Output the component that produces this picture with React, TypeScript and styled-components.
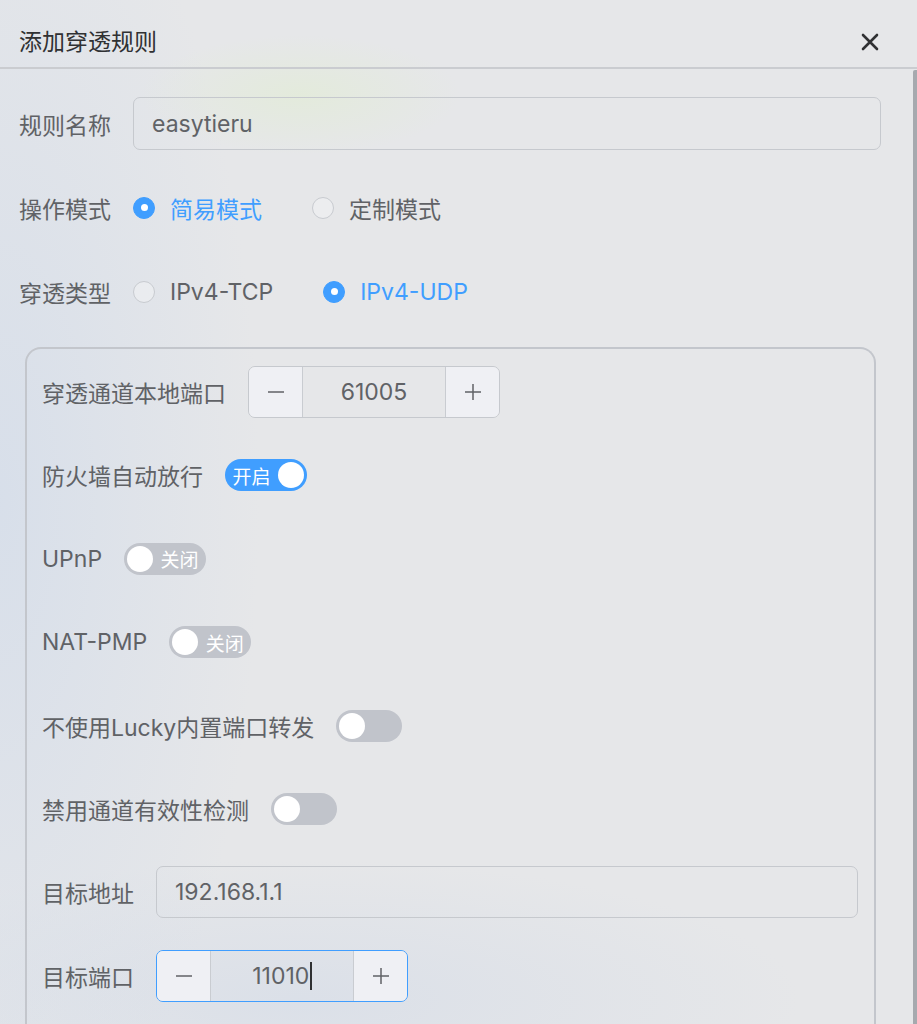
import React from "react";
import styled, { createGlobalStyle } from "styled-components";

const Global = createGlobalStyle`
  html, body { margin: 0; padding: 0; }
  body {
    width: 917px;
    height: 1024px;
    overflow: hidden;
    font-family: Inter, "Noto Sans CJK SC", sans-serif;
    background:
      radial-gradient(ellipse 160px 60px at 300px 95px, rgba(226, 236, 214, 0.7), transparent),
      radial-gradient(ellipse 260px 700px at 0px 500px, rgba(214, 222, 234, 0.9), transparent),
      radial-gradient(ellipse 500px 140px at 300px 1000px, rgba(216, 222, 232, 0.8), transparent),
      #e6e7e9;
  }
`;

const Dialog = styled.div`
  display: flex;
  flex-direction: column;
  width: 917px;
  height: 1024px;
`;

const Header = styled.div`
  height: 69px;
  box-sizing: border-box;
  flex: none;
  display: flex;
  align-items: center;
  justify-content: space-between;
  padding: 16px 37px 0 19px;
  border-bottom: 2px solid #caccd0;
`;

const Title = styled.div`
  font-size: 23px;
  color: #303133;
  line-height: 32px;
`;

const CloseBtn = styled.button`
  border: none;
  background: transparent;
  padding: 0;
  width: 20px;
  height: 20px;
  display: flex;
  align-items: center;
  justify-content: center;
  cursor: pointer;
`;

const BodyWrap = styled.div`
  flex: 1;
  display: flex;
  min-height: 0;
`;

const Body = styled.div`
  flex: 1;
  padding: 28px 32px 0 19px;
  display: flex;
  flex-direction: column;
  gap: 31px;
`;

const ScrollThumb = styled.div`
  width: 4px;
  flex: none;
  background: #a6a9ae;
  border-radius: 2px 0 0 0;
  margin-top: 1px;
`;

const Row = styled.div`
  display: flex;
  align-items: center;
  height: 53px;
`;

const Label = styled.div`
  font-size: 23px;
  color: #606266;
  padding-right: 22px;
  white-space: nowrap;
  flex: none;
`;

const TextInput = styled.div`
  flex: 1;
  height: 100%;
  box-sizing: border-box;
  border: 1.5px solid #c6c9ce;
  border-radius: 7px;
  display: flex;
  align-items: center;
  padding-left: 18px;
  font-size: 23px;
  color: #606266;
`;

const RadioGroup = styled.div`
  display: flex;
  align-items: center;
`;

const RadioItem = styled.label<{ $checked?: boolean }>`
  display: flex;
  align-items: center;
  gap: 15px;
  margin-right: 50px;
  font-size: 23px;
  color: ${(p) => (p.$checked ? "#409eff" : "#606266")};
  cursor: pointer;
`;

const RadioDot = styled.span<{ $checked?: boolean }>`
  width: 22px;
  height: 22px;
  box-sizing: border-box;
  border-radius: 50%;
  border: 1.5px solid ${(p) => (p.$checked ? "#409eff" : "#c8cbd0")};
  background: ${(p) => (p.$checked ? "#409eff" : "rgba(240,241,243,0.6)")};
  display: flex;
  align-items: center;
  justify-content: center;
  &::after {
    content: "";
    width: 7px;
    height: 7px;
    border-radius: 50%;
    background: #fff;
    display: ${(p) => (p.$checked ? "block" : "none")};
  }
`;

const Card = styled.div`
  margin: -2px 5px 0 6px;
  border: 2px solid #c3c6cc;
  border-bottom: none;
  border-radius: 16px 16px 0 0;
  padding: 17px 16px 0 15px;
  display: flex;
  flex-direction: column;
  gap: 31.4px;
  flex: 1;
`;

const CardRow = styled.div`
  display: flex;
  align-items: center;
  height: 52px;
`;

const NumberBox = styled.div<{ $focused?: boolean }>`
  display: flex;
  height: 100%;
  box-sizing: border-box;
  border: 1.5px solid ${(p) => (p.$focused ? "#409eff" : "#c6c9ce")};
  border-radius: 7px;
  overflow: hidden;
`;

const Stepper = styled.div<{ $side: "left" | "right" }>`
  width: 53px;
  display: flex;
  align-items: center;
  justify-content: center;
  background: #eff0f4;
  border-${(p) => (p.$side === "left" ? "right" : "left")}: 1.5px solid #c9ccd1;
`;

const NumberValue = styled.div<{ $width: number }>`
  width: ${(p) => p.$width}px;
  display: flex;
  align-items: center;
  justify-content: center;
  font-size: 23px;
  color: #606266;
`;

const Caret = styled.span`
  display: inline-block;
  width: 1.5px;
  height: 28px;
  background: #303133;
  margin-left: 1px;
`;

const Switch = styled.div<{ $on?: boolean; $width: number }>`
  width: ${(p) => p.$width}px;
  height: 32px;
  box-sizing: border-box;
  border-radius: 16px;
  background: ${(p) => (p.$on ? "#409eff" : "#c1c4cb")};
  display: flex;
  flex-direction: ${(p) => (p.$on ? "row-reverse" : "row")};
  align-items: center;
  padding: 0 3px;
  gap: 3px;
`;

const Knob = styled.span`
  width: 26px;
  height: 26px;
  border-radius: 50%;
  background: #fff;
  flex: none;
`;

const SwitchText = styled.span`
  font-size: 19px;
  color: #fff;
  flex: 1;
  text-align: center;
`;

const Minus = () => (
  <svg width="20" height="20" viewBox="0 0 20 20">
    <path d="M2 10h16" stroke="#606266" strokeWidth="1.5" />
  </svg>
);

const Plus = () => (
  <svg width="20" height="20" viewBox="0 0 20 20">
    <path d="M2 10h16M10 2v16" stroke="#606266" strokeWidth="1.5" />
  </svg>
);

const Toggle = ({ on, text, width }: { on?: boolean; text?: string; width: number }) => (
  <Switch $on={on} $width={width}>
    <Knob />
    {text ? <SwitchText>{text}</SwitchText> : null}
  </Switch>
);

export default function App() {
  return (
    <>
      <Global />
      <Dialog>
        <Header>
          <Title>添加穿透规则</Title>
          <CloseBtn aria-label="close">
            <svg width="18" height="18" viewBox="0 0 18 18">
              <path d="M2 2L16 16M16 2L2 16" stroke="#303133" strokeWidth="2.6" strokeLinecap="round" />
            </svg>
          </CloseBtn>
        </Header>
        <BodyWrap>
          <Body>
            <Row>
              <Label>规则名称</Label>
              <TextInput>easytieru</TextInput>
            </Row>
            <Row>
              <Label>操作模式</Label>
              <RadioGroup>
                <RadioItem $checked>
                  <RadioDot $checked />
                  简易模式
                </RadioItem>
                <RadioItem>
                  <RadioDot />
                  定制模式
                </RadioItem>
              </RadioGroup>
            </Row>
            <Row>
              <Label>穿透类型</Label>
              <RadioGroup>
                <RadioItem>
                  <RadioDot />
                  IPv4-TCP
                </RadioItem>
                <RadioItem $checked>
                  <RadioDot $checked />
                  IPv4-UDP
                </RadioItem>
              </RadioGroup>
            </Row>
            <Card>
              <CardRow>
                <Label>穿透通道本地端口</Label>
                <NumberBox>
                  <Stepper $side="left"><Minus /></Stepper>
                  <NumberValue $width={142}>61005</NumberValue>
                  <Stepper $side="right"><Plus /></Stepper>
                </NumberBox>
              </CardRow>
              <CardRow>
                <Label>防火墙自动放行</Label>
                <Toggle on text="开启" width={82} />
              </CardRow>
              <CardRow>
                <Label>UPnP</Label>
                <Toggle text="关闭" width={82} />
              </CardRow>
              <CardRow>
                <Label>NAT-PMP</Label>
                <Toggle text="关闭" width={82} />
              </CardRow>
              <CardRow>
                <Label>不使用Lucky内置端口转发</Label>
                <Toggle width={66} />
              </CardRow>
              <CardRow>
                <Label>禁用通道有效性检测</Label>
                <Toggle width={66} />
              </CardRow>
              <CardRow>
                <Label>目标地址</Label>
                <TextInput>192.168.1.1</TextInput>
              </CardRow>
              <CardRow>
                <Label>目标端口</Label>
                <NumberBox $focused>
                  <Stepper $side="left"><Minus /></Stepper>
                  <NumberValue $width={142}>
                    11010<Caret />
                  </NumberValue>
                  <Stepper $side="right"><Plus /></Stepper>
                </NumberBox>
              </CardRow>
            </Card>
          </Body>
          <ScrollThumb />
        </BodyWrap>
      </Dialog>
    </>
  );
}
